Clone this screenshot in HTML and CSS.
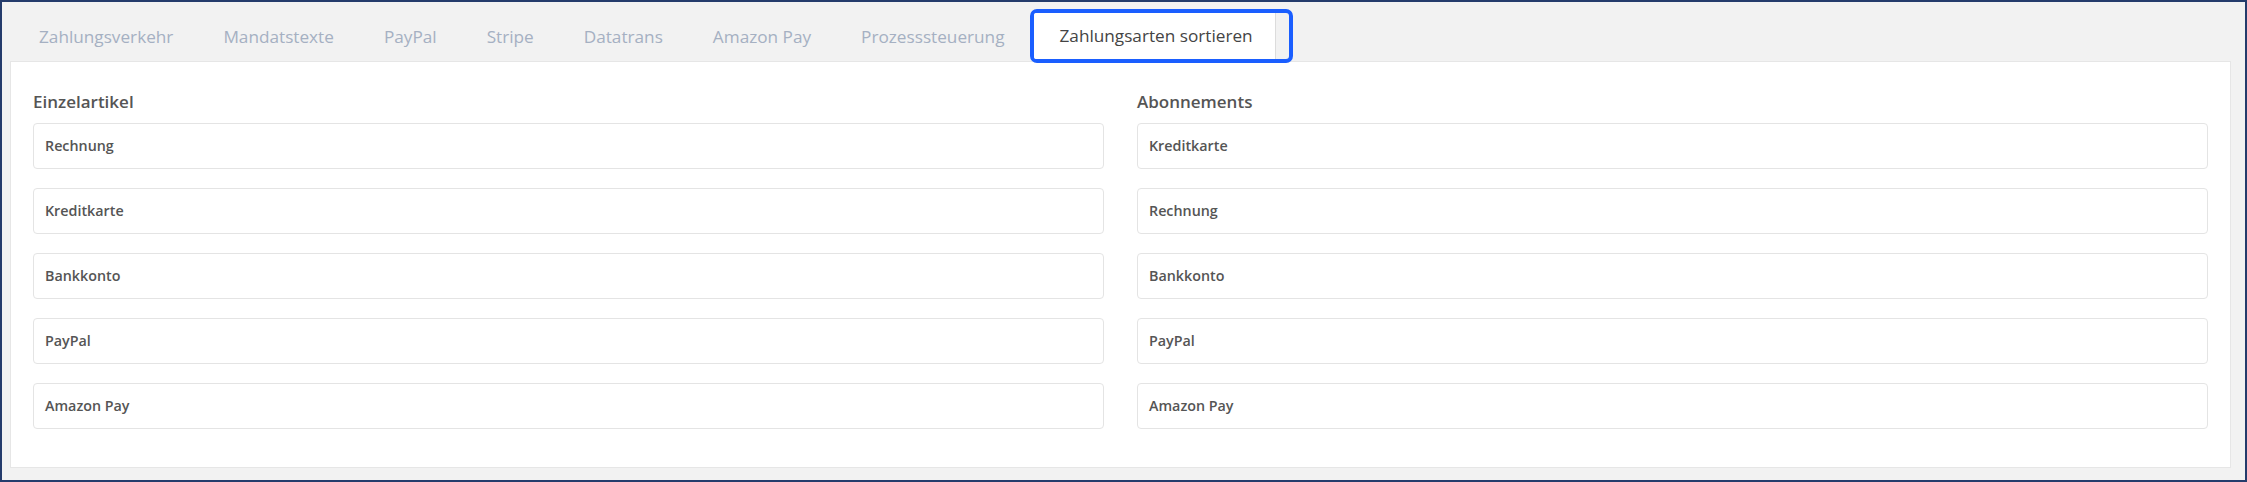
FILE: index.html
```html
<!DOCTYPE html>
<html lang="de">
<head>
<meta charset="utf-8">
<title>Zahlungsarten sortieren</title>
<link rel="stylesheet" href="styles.css">
</head>
<body>
<div class="frame">
  <nav class="tabs">
    <span class="tab">Zahlungsverkehr</span>
    <span class="tab">Mandatstexte</span>
    <span class="tab">PayPal</span>
    <span class="tab">Stripe</span>
    <span class="tab">Datatrans</span>
    <span class="tab">Amazon Pay</span>
    <span class="tab">Prozesssteuerung</span>
    <span class="tab-active"><span class="tab-active-inner">Zahlungsarten sortieren</span></span>
  </nav>
  <section class="panel">
    <div class="column">
      <h3 class="col-title">Einzelartikel</h3>
      <div class="list">
        <div class="item">Rechnung</div>
        <div class="item">Kreditkarte</div>
        <div class="item">Bankkonto</div>
        <div class="item">PayPal</div>
        <div class="item">Amazon Pay</div>
      </div>
    </div>
    <div class="column">
      <h3 class="col-title">Abonnements</h3>
      <div class="list">
        <div class="item">Kreditkarte</div>
        <div class="item">Rechnung</div>
        <div class="item">Bankkonto</div>
        <div class="item">PayPal</div>
        <div class="item">Amazon Pay</div>
      </div>
    </div>
  </section>
</div>
</body>
</html>
```

FILE: styles.css
```css
* { box-sizing: border-box; }
html, body { margin: 0; padding: 0; background: #f2f2f2; }
body { font-family: "Open Sans", "Noto Sans", sans-serif; }

.frame {
  width: 2247px;
  height: 482px;
  border: 2px solid #243c6c;
  background: #f2f2f2;
  padding: 0 14px 0 8px;
  display: flex;
  flex-direction: column;
}

.tabs {
  height: 59px;
  display: flex;
  align-items: flex-end;
  padding-left: 4px;
}

.tab {
  height: 48px;
  line-height: 48px;
  padding: 0 25px;
  font-size: 17.2px;
  color: #a5b0c2;
  white-space: nowrap;
}

.tab-active {
  position: relative;
  z-index: 1;
  height: 54px;
  margin-bottom: -2px;
  border: 4px solid #1a5eff;
  border-radius: 7px;
  padding-right: 13px;
  background: #f2f2f2;
  display: flex;
}

.tab-active-inner {
  height: 46px;
  line-height: 46px;
  padding: 0 22px 0 26px;
  background: #ffffff;
  border-right: 1px solid #dcdcdc;
  border-radius: 2px 0 0 2px;
  font-size: 17.2px;
  color: #444444;
  white-space: nowrap;
}

.panel {
  height: 407px;
  background: #ffffff;
  border: 1px solid #e6e6e6;
  padding: 28px 22px 0 22px;
  display: grid;
  grid-template-columns: 1fr 1fr;
  column-gap: 33px;
  align-items: start;
}

.col-title {
  margin: 0 0 9px 0;
  height: 24px;
  line-height: 24px;
  font-size: 17px;
  font-weight: 600;
  color: #555555;
}

.list {
  display: flex;
  flex-direction: column;
  gap: 19px;
}

.item {
  height: 46px;
  line-height: 44px;
  border: 1px solid #e4e4e4;
  border-radius: 4px;
  padding: 0 11px;
  font-size: 14.3px;
  font-weight: 600;
  color: #555555;
}
```
